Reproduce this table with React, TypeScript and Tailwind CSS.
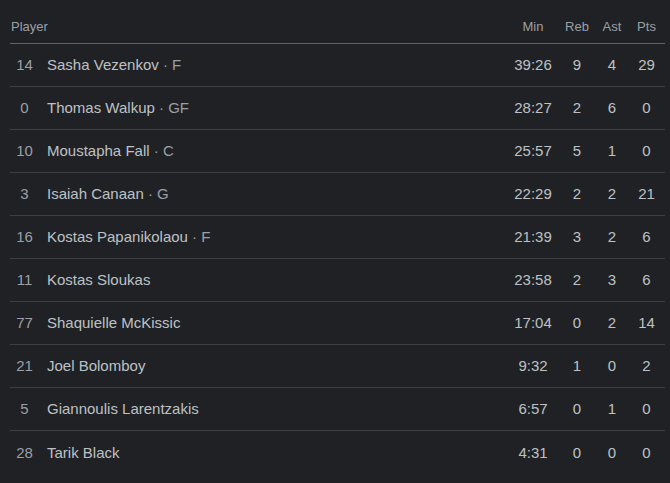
import React from "react";

type Row = { no: string; name: string; pos?: string; min: string; reb: number; ast: number; pts: number };

const rows: Row[] = [
  { no: "14", name: "Sasha Vezenkov", pos: "F", min: "39:26", reb: 9, ast: 4, pts: 29 },
  { no: "0", name: "Thomas Walkup", pos: "GF", min: "28:27", reb: 2, ast: 6, pts: 0 },
  { no: "10", name: "Moustapha Fall", pos: "C", min: "25:57", reb: 5, ast: 1, pts: 0 },
  { no: "3", name: "Isaiah Canaan", pos: "G", min: "22:29", reb: 2, ast: 2, pts: 21 },
  { no: "16", name: "Kostas Papanikolaou", pos: "F", min: "21:39", reb: 3, ast: 2, pts: 6 },
  { no: "11", name: "Kostas Sloukas", min: "23:58", reb: 2, ast: 3, pts: 6 },
  { no: "77", name: "Shaquielle McKissic", min: "17:04", reb: 0, ast: 2, pts: 14 },
  { no: "21", name: "Joel Bolomboy", min: "9:32", reb: 1, ast: 0, pts: 2 },
  { no: "5", name: "Giannoulis Larentzakis", min: "6:57", reb: 0, ast: 1, pts: 0 },
  { no: "28", name: "Tarik Black", min: "4:31", reb: 0, ast: 0, pts: 0 },
];

export default function App() {
  return (
    <div
      className="w-[670px] h-[483px] bg-[#202124] pl-[10px] pr-[5px] overflow-hidden"
      style={{ fontFamily: '"Liberation Sans", Arial, sans-serif' }}
    >
      <div className="flex items-end h-[44px] border-b border-[#5f6368] pb-[8px] text-[13px] leading-[16px] text-[#9aa0a6]">
        <div className="flex-1 pl-[1px]">Player</div>
        <div className="w-[50px] text-center">Min</div>
        <div className="w-[38px] text-center">Reb</div>
        <div className="w-[32px] text-center">Ast</div>
        <div className="w-[37px] text-center">Pts</div>
      </div>
      {rows.map((r, i) => (
        <div
          key={i}
          className={
            "flex items-center h-[43px] text-[15px] leading-[18px] text-[#bdc1c6] " +
            (i < rows.length - 1 ? "border-b border-[#3c4043]" : "")
          }
        >
          <div className="w-[29px] text-center text-[#9aa0a6]">{r.no}</div>
          <div className="flex-1 pl-[8px] whitespace-nowrap">
            {r.name}
            {r.pos && <span className="text-[#9aa0a6]"> · {r.pos}</span>}
          </div>
          <div className="w-[50px] text-center">{r.min}</div>
          <div className="w-[38px] text-center">{r.reb}</div>
          <div className="w-[32px] text-center">{r.ast}</div>
          <div className="w-[37px] text-center">{r.pts}</div>
        </div>
      ))}
    </div>
  );
}
